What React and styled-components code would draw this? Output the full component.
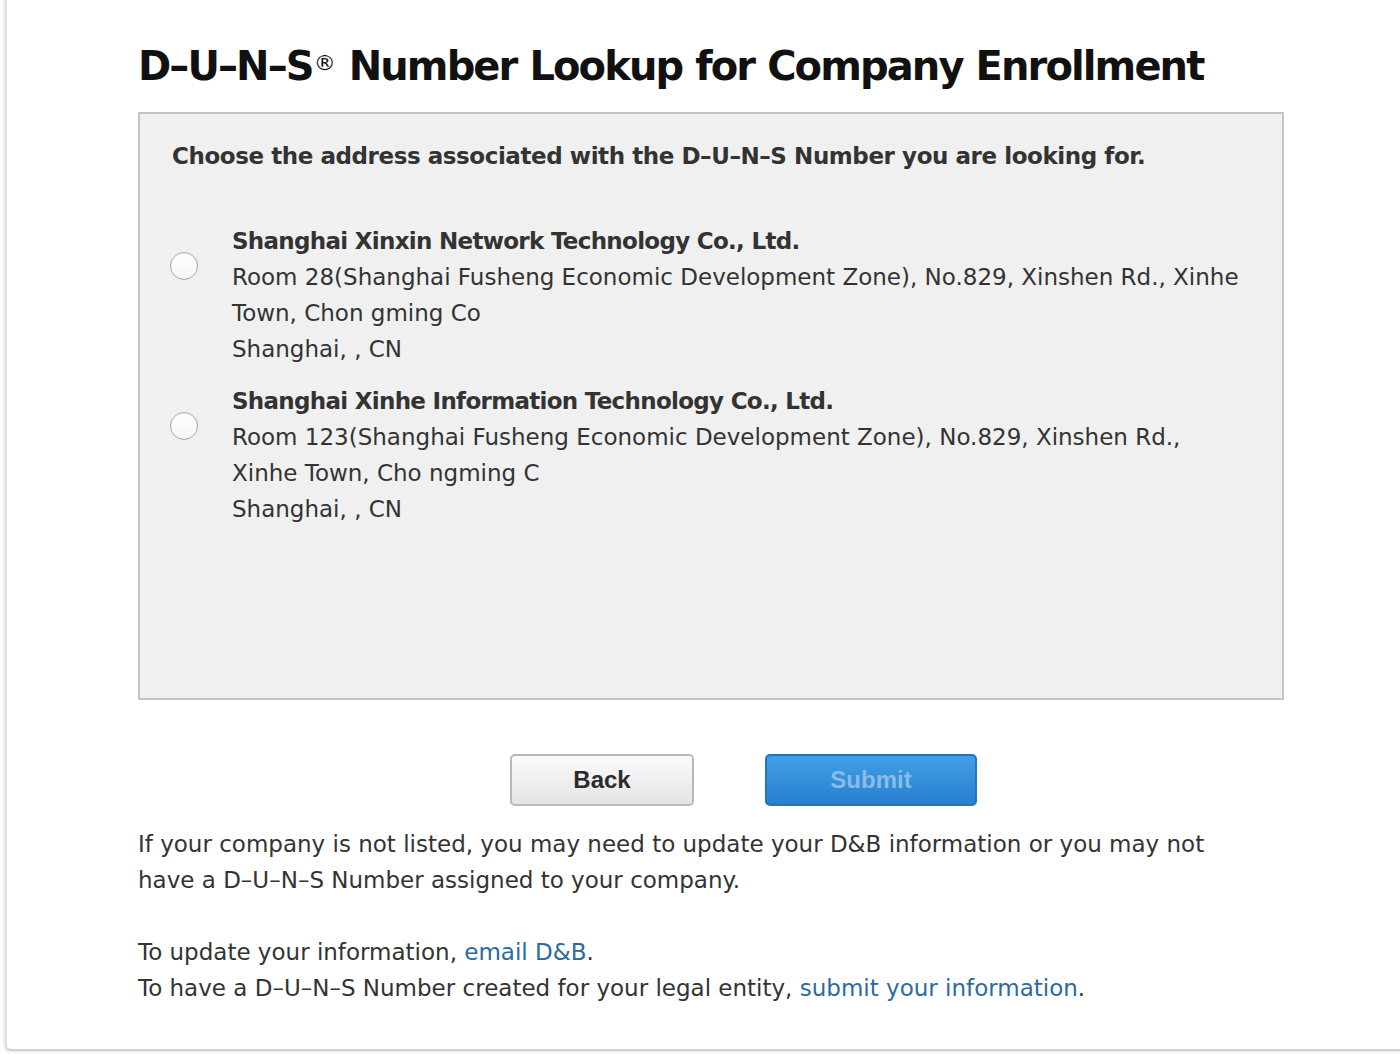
import React from "react";
import styled, { createGlobalStyle } from "styled-components";

const Global = createGlobalStyle`
  html, body { margin: 0; padding: 0; background: #ffffff; }
  body { font-family: "DejaVu Sans", "Noto Sans", sans-serif; color: #333; }
`;

const Page = styled.div`
  width: 1400px;
  height: 1054px;
  overflow: hidden;
  box-sizing: border-box;
  padding-left: 5px;
`;

const Card = styled.div`
  box-sizing: border-box;
  width: 1420px;
  height: 1055px;
  margin-top: -4px;
  background: #fff;
  border-left: 2px solid #dedede;
  border-bottom: 2px solid #cfcfcf;
  border-bottom-left-radius: 6px;
  box-shadow: -1px 1px 3px rgba(0, 0, 0, 0.12);
  padding: 44px 0 0 131px;
`;

const Title = styled.h1`
  margin: 0;
  font-size: 40px;
  font-weight: bold;
  color: #111;
  letter-spacing: -1.9px;
  line-height: 52px;
  word-spacing: 1px;
  sup {
    font-size: 22px;
    font-weight: normal;
    vertical-align: top;
    position: relative;
    top: -3px;
    margin-left: 1px;
    letter-spacing: 0;
  }
`;

const Panel = styled.div`
  box-sizing: border-box;
  margin-top: 20px;
  width: 1146px;
  height: 588px;
  background: #f0f0f0;
  border: 2px solid #c4c4c4;
  padding: 22px 32px 0 32px;
`;

const Prompt = styled.p`
  margin: 0 0 47px 0;
  font-size: 23px;
  font-weight: bold;
  letter-spacing: -0.43px;
  line-height: 40px;
  color: #333;
`;

const Option = styled.label`
  display: flex;
  align-items: flex-start;
  gap: 34px;
  margin-bottom: 16px;
  cursor: pointer;
`;

const Radio = styled.span`
  flex: none;
  width: 26px;
  height: 26px;
  margin-top: 29px;
  border-radius: 50%;
  border: 1px solid #a8a8a8;
  background: linear-gradient(#ffffff, #f6f6f6);
  box-shadow: inset 0 1px 1px rgba(0,0,0,0.05);
  margin-left: -2px;
`;

const OptionText = styled.div`
  font-size: 23px;
  line-height: 36px;
  color: #333;
`;

const Name = styled.div`
  font-weight: bold;
  letter-spacing: -0.7px;
`;

const Actions = styled.div`
  display: flex;
  gap: 71px;
  margin: 54px 0 0 372px;
`;

const Button = styled.button`
  box-sizing: border-box;
  height: 52px;
  border-radius: 5px;
  font-family: "Liberation Sans", Arial, sans-serif;
  font-weight: bold;
  font-size: 24px;
  cursor: pointer;
`;

const BackButton = styled(Button)`
  width: 184px;
  border: 2px solid #b9b9b9;
  background: linear-gradient(#fbfbfb, #e4e4e4);
  color: #2b2b2b;
`;

const SubmitButton = styled(Button)`
  width: 212px;
  border: 2px solid #2475bd;
  background: linear-gradient(#449ee3, #2680d0);
  color: #86bdea;
`;

const Note = styled.p`
  margin: 20px 0 0 0;
  width: 1120px;
  font-size: 23px;
  line-height: 36px;
  color: #333;
`;

const Note2 = styled(Note)`
  margin-top: 36px;
`;

const Link = styled.a`
  color: #2c6aa0;
  text-decoration: none;
`;

export default function App() {
  return (
    <>
      <Global />
      <Page>
        <Card>
          <Title>
            D–U–N–S<sup>®</sup> Number Lookup for Company Enrollment
          </Title>
          <Panel>
            <Prompt>Choose the address associated with the D–U–N–S Number you are looking for.</Prompt>
            <Option>
              <Radio />
              <OptionText>
                <Name>Shanghai Xinxin Network Technology Co., Ltd.</Name>
                <div>Room 28(Shanghai Fusheng Economic Development Zone), No.829, Xinshen Rd., Xinhe Town, Chon gming Co</div>
                <div>Shanghai, , CN</div>
              </OptionText>
            </Option>
            <Option>
              <Radio />
              <OptionText>
                <Name>Shanghai Xinhe Information Technology Co., Ltd.</Name>
                <div>Room 123(Shanghai Fusheng Economic Development Zone), No.829, Xinshen Rd., Xinhe Town, Cho ngming C</div>
                <div>Shanghai, , CN</div>
              </OptionText>
            </Option>
          </Panel>
          <Actions>
            <BackButton type="button">Back</BackButton>
            <SubmitButton type="button">Submit</SubmitButton>
          </Actions>
          <Note>
            If your company is not listed, you may need to update your D&amp;B information or you may not have a D–U–N–S Number assigned to your company.
          </Note>
          <Note2>
            To update your information, <Link href="#">email D&amp;B</Link>.<br />
            To have a D–U–N–S Number created for your legal entity, <Link href="#">submit your information</Link>.
          </Note2>
        </Card>
      </Page>
    </>
  );
}
